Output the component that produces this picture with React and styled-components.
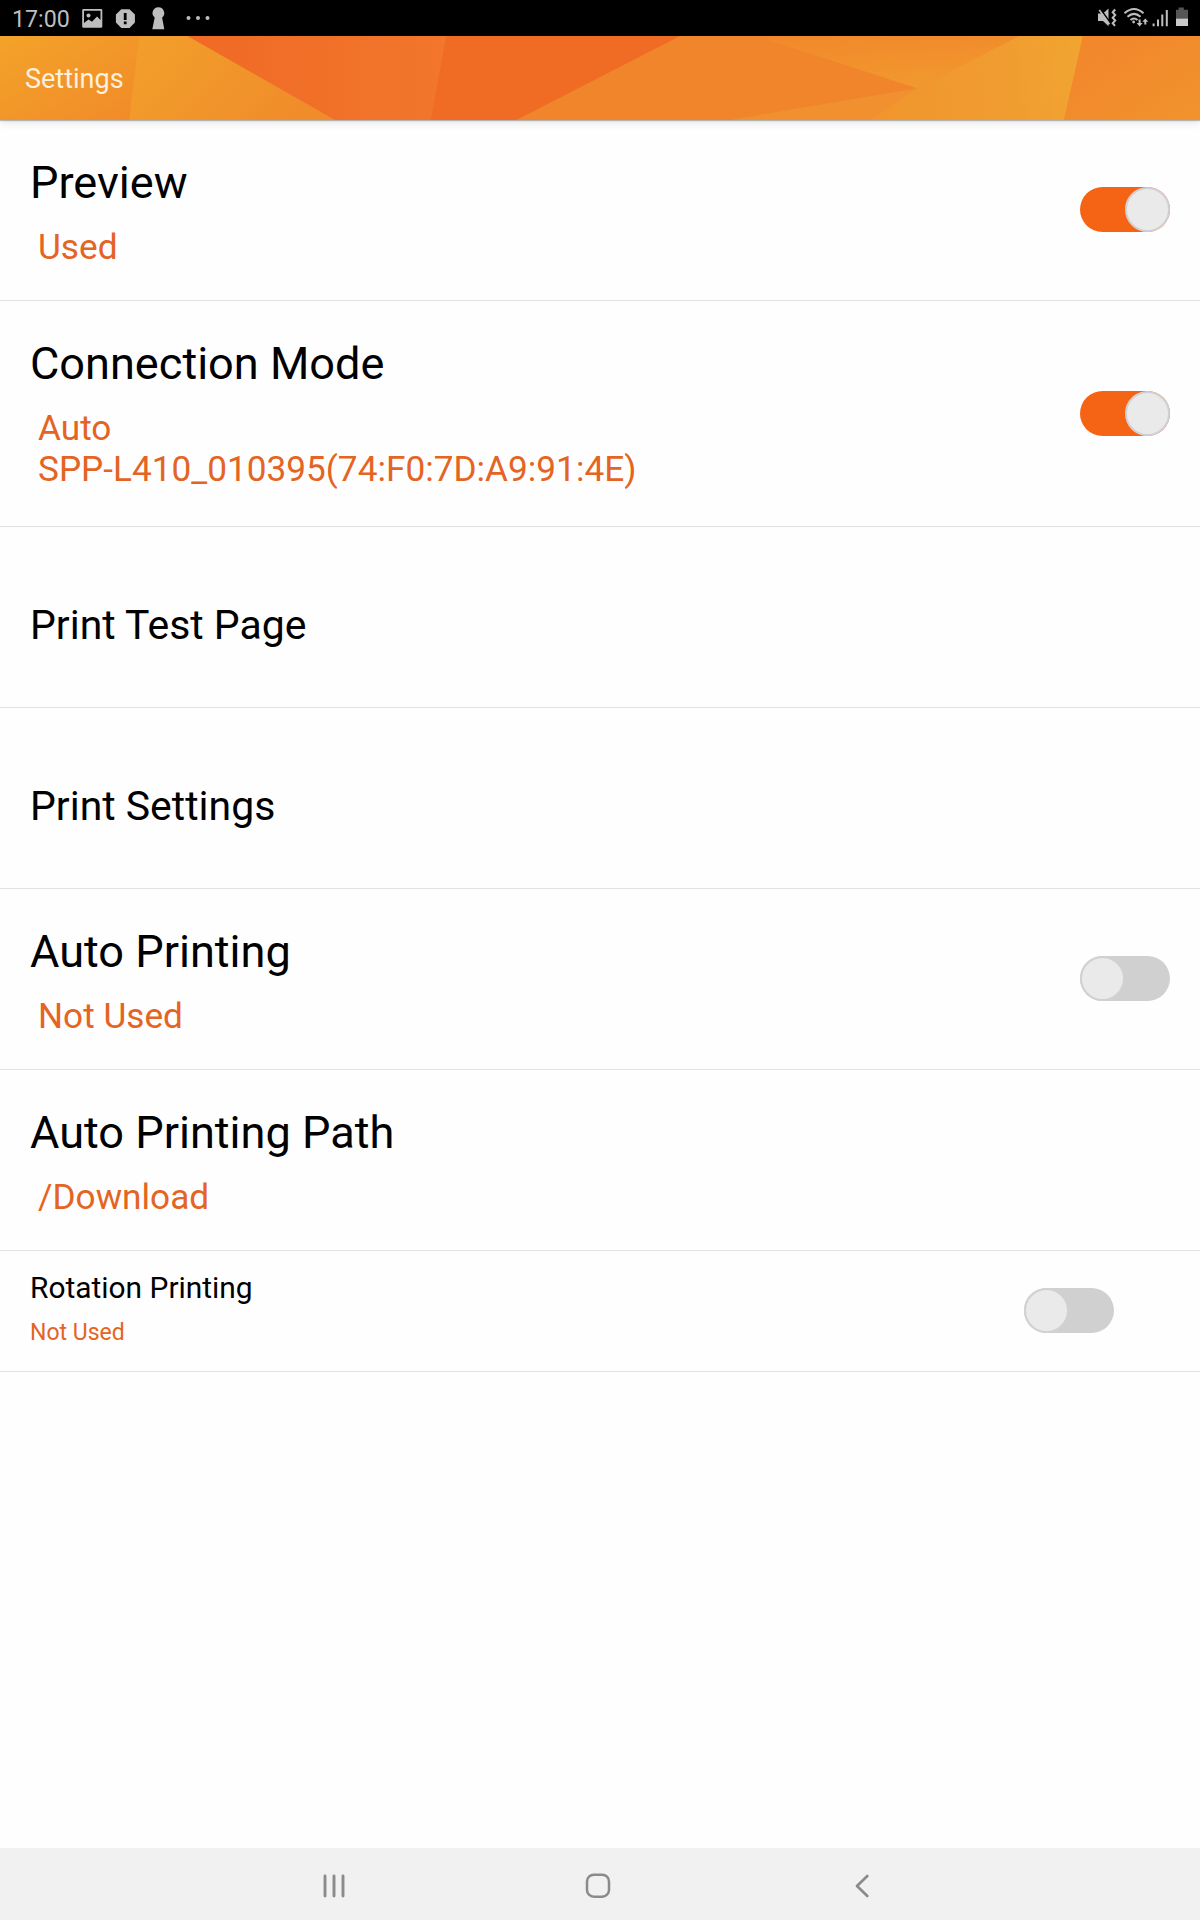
import React from 'react';
import styled, { createGlobalStyle } from 'styled-components';

const settings = [
  { title: 'Preview', lines: ['Used'], toggle: true, on: true },
  { title: 'Connection Mode', lines: ['Auto', 'SPP-L410_010395(74:F0:7D:A9:91:4E)'], toggle: true, on: true, height: 226 },
  { title: 'Print Test Page', plain: true },
  { title: 'Print Settings', plain: true },
  { title: 'Auto Printing', lines: ['Not Used'], toggle: true, on: false },
  { title: 'Auto Printing Path', lines: ['/Download'] },
  { title: 'Rotation Printing', lines: ['Not Used'], toggle: true, on: false, small: true, height: 121 },
]

class App extends React.Component {
  state = { settings }

  toggle = (index) => {
    const settings = this.state.settings.map( (s, i) => i === index ? { ...s, on: !s.on } : s )
    this.setState({ settings });
  }

  renderSetting = (setting, i) => {
    const { title, lines, toggle, on, plain, small, height } = setting;

    return (
      <Row key={title} $small={small} $height={height}>
        <Labels $small={small}>
          { plain ? <PlainTitle>{title}</PlainTitle> : <Title $small={small}>{title}</Title> }
          { lines && 
            <Summary $small={small}>
              { lines.map( line => <SummaryLine key={line}>{line}</SummaryLine> )}
            </Summary>
          }
        </Labels>
        { toggle && <Switch role="switch" aria-checked={on} $on={on} onClick={() => this.toggle(i)}><Knob /></Switch> }
      </Row>
    )
  }

  render() {
    return (
      <Screen>
        <GlobalStyle />
        <StatusBar>
          <Clock>17:00</Clock>
          <NotificationIcons />
          <SystemIcons />
        </StatusBar>
        <Header>
          <HeaderArt />
          <HeaderTitle>Settings</HeaderTitle>
        </Header>
        <List>
          { this.state.settings.map(this.renderSetting) }
        </List>
        <NavBar>
          <NavButton aria-label="Recents">
            <svg width="24" height="26" viewBox="0 0 24 26" stroke="#8b8b8b" strokeWidth="2.9" strokeLinecap="round">
              <path d="M3 3v20M12 3v20M21 3v20" />
            </svg>
          </NavButton>
          <NavButton aria-label="Home">
            <svg width="26" height="26" viewBox="0 0 26 26" fill="none" stroke="#8b8b8b" strokeWidth="2.5">
              <rect x="2" y="1.7" width="22" height="22" rx="6.8" />
            </svg>
          </NavButton>
          <NavButton aria-label="Back">
            <svg width="26" height="26" viewBox="0 0 26 26" fill="none" stroke="#8b8b8b" strokeWidth="2.7" strokeLinecap="round" strokeLinejoin="round">
              <path d="M18.3 3L8 13l10.3 10" />
            </svg>
          </NavButton>
        </NavBar>
      </Screen>
    )
  }
}

const NotificationIcons = () => (
  <svg width="130" height="36" viewBox="82 0 130 36" fill="#bebebe">
    <path fillRule="evenodd" d="M83.500 9h17.500a1.300 1.300 0 0 1 1.300 1.300v16.200a1.300 1.300 0 0 1-1.300 1.300h-17.500a1.300 1.300 0 0 1-1.300-1.300V10.300A1.300 1.300 0 0 1 83.500 9zM84 10.800v12.200l4.500-3.500 3.500 2.200 5-5.200 3.500 3.500v-9.200z" />
    <circle cx="88.500" cy="15.500" r="2" />
    <path fillRule="evenodd" d="M121.300 9.200h8.200l5.400 5.400v8l-5.400 5.400h-8.200l-5.400-5.400v-8zM123.800 13v7h2.800v-7zM123.800 21.600v2.600h2.800v-2.600z" />
    <path d="M158.500 7.300a5.800 5.800 0 0 1 3.600 10.300l2.200 11.600h-12l2.400-11.600a5.800 5.800 0 0 1 3.800-10.300z" />
    <circle cx="188.500" cy="18" r="2" />
    <circle cx="198" cy="18" r="2" />
    <circle cx="207.500" cy="18" r="2" />
  </svg>
)

const SystemIcons = () => (
  <SystemIconsSvg width="94" height="36" viewBox="1096 0 94 36" fill="#bebebe">
    <path d="M1098 13.500h5l5.500-5v17.700l-5.500-5.200h-5z" />
    <path d="M1100.600 9.300l10 14" stroke="#000" strokeWidth="1.600" />
    <path d="M1099.300 10l10.200 14.300" stroke="#bebebe" strokeWidth="1.700" />
    <path d="M1115.200 9.500l-2.500 2.800 2.500 2.700-2.500 2.700 2.500 2.800-2.500 2.700 2.300 2.600" fill="none" stroke="#bebebe" strokeWidth="2" />
    <g fill="none" stroke="#bebebe" strokeWidth="2">
      <path d="M1124.500 13.300q9.500-8.600 19 0" />
      <path d="M1127.500 16.800q6.500-5.800 13 0" />
      <path d="M1130.500 20q3.500-3 7 0" />
    </g>
    <circle cx="1133.600" cy="22" r="1.400" />
    <path d="M1138.600 19.500v3.500h-2l3 3.400 3-3.400h-2v-3.500zM1144.300 24.500v-2.700h-2l3-3.200 3 3.200h-2v2.700z" />
    <path d="M1152.600 23.600h2v2.600h-2zM1157 19.500h2v6.700h-2zM1161.300 14.600h2v11.600h-2zM1165.800 10h2v16.200h-2z" />
    <path d="M1176 9.800h2.600V7.600h5.200v2.200h4.200v8.700h-12z" fill="#555" />
    <path d="M1176 18.500h12v7.500h-12z" fill="#cacaca" />
  </SystemIconsSvg>
)

const HeaderArt = () => (
  <ArtSvg viewBox="0 36 1200 84" preserveAspectRatio="none">
    <defs>
      <linearGradient id="left" x1="0" y1="0" x2="1" y2="1">
        <stop offset="0" stopColor="#f3a32a" />
        <stop offset="1" stopColor="#f18a29" />
      </linearGradient>
      <linearGradient id="gold" gradientUnits="userSpaceOnUse" x1="150" y1="36" x2="270" y2="140">
        <stop offset="0" stopColor="#f29e2b" />
        <stop offset="1" stopColor="#f08d2a" />
      </linearGradient>
      <linearGradient id="red">
        <stop offset="0" stopColor="#f06a25" />
        <stop offset="1" stopColor="#f2762c" />
      </linearGradient>
      <linearGradient id="top" x1="0" y1="0" x2="0.3" y2="1">
        <stop offset="0" stopColor="#f1882b" />
        <stop offset="1" stopColor="#f1982e" />
      </linearGradient>
      <linearGradient id="sun" gradientUnits="userSpaceOnUse" x1="880" y1="100" x2="1080" y2="70">
        <stop offset="0" stopColor="#f0962d" />
        <stop offset="0.600" stopColor="#f09c30" />
        <stop offset="1" stopColor="#f1a430" />
      </linearGradient>
      <linearGradient id="right" x1="0" y1="0" x2="1" y2="1">
        <stop offset="0.150" stopColor="#f2872c" />
        <stop offset="1" stopColor="#f0932c" />
      </linearGradient>
    </defs>
    <path d="M0 36H1200V120H0z" fill="#f0852b" />
    <path d="M0 36H139L129 120H0z" fill="url(#left)" />
    <path d="M139 36H188L335 120H129z" fill="url(#gold)" />
    <path d="M187.500 36H446L430.500 120H335z" fill="url(#red)" />
    <path d="M446 36H680L516.500 120H430.500z" fill="#f06c25" />
    <path d="M756 36H1019L917 88.300z" fill="url(#top)" />
    <path d="M917 88.300L870 120H730z" fill="#f0902f" />
    <path d="M1019 36H1083L1064 120H870L917 88.300z" fill="url(#sun)" />
    <path d="M1083 36H1200V120H1064z" fill="url(#right)" />
  </ArtSvg>
)

const GlobalStyle = createGlobalStyle`
  body {
    margin: 0;
    background: #fff;
    font-family: Roboto, sans-serif;
  }
`

const Screen = styled.div`
  display: flex;
  flex-direction: column;
  width: 1200px;
  height: 1920px;
  background: #fefefe;
`

const StatusBar = styled.div`
  display: flex;
  align-items: center;
  height: 36px;
  box-sizing: border-box;
  padding: 0 10px 0 12px;
  background: #000;
`

const Clock = styled.span`
  width: 70px;
  padding-top: 3px;
  font-size: 23.2px;
  line-height: 33px;
  color: #bebebe;
`

const SystemIconsSvg = styled.svg`
  margin-left: auto;
`

const Header = styled.header`
  position: relative;
  display: flex;
  align-items: center;
  height: 84px;
  flex: none;
  box-shadow: 0 1px 1px rgba(0, 0, 0, 0.24), 0 3px 8px rgba(0, 0, 0, 0.1);
`

// sits behind the title
const ArtSvg = styled.svg`
  position: absolute;
  top: 0;
  left: 0;
  width: 100%;
  height: 100%;
`

const HeaderTitle = styled.h1`
  position: relative;
  margin: 2px 0 0 25px;
  font-size: 27px;
  font-weight: 400;
  line-height: 32px;
  color: #fdf0dc;
`

const List = styled.div`
  flex: 1;
`

const Row = styled.div`
  display: flex;
  align-items: center;
  justify-content: space-between;
  box-sizing: border-box;
  height: ${props => props.$height || 181}px;
  padding: 0 ${props => props.$small ? '86px' : '30px'} 0 30px;
  border-bottom: 1px solid #e2e2e2;
`

const Labels = styled.div`
  display: flex;
  flex-direction: column;
  align-self: flex-start;
  padding-top: ${props => props.$small ? '19px' : '36px'};
`

const Title = styled.div`
  font-size: ${props => props.$small ? '29.9px' : '45.1px'};
  line-height: ${props => props.$small ? '35px' : '53px'};
  color: #000;
`

const PlainTitle = styled.div`
  padding-top: 38px;
  font-size: 40.95px;
  line-height: 48px;
  color: #000;
`

const Summary = styled.div`
  margin-top: ${props => props.$small ? '14px' : '18px'};
  padding-left: ${props => props.$small ? '0' : '8px'};
  font-size: ${props => props.$small ? '23px' : '35.2px'};
  line-height: ${props => props.$small ? '28px' : '41px'};
  color: #e46423;
`

const SummaryLine = styled.div`
  white-space: nowrap;
`

const Switch = styled.button`
  display: flex;
  justify-content: ${props => props.$on ? 'flex-end' : 'flex-start'};
  width: 90px;
  height: 45px;
  margin-bottom: 1px;
  padding: 0;
  border: none;
  border-radius: 23px;
  background: ${props => props.$on ? '#f56414' : '#d0d0d0'};
  cursor: pointer;
`

const Knob = styled.span`
  box-sizing: border-box;
  width: 45px;
  height: 45px;
  border: 2px solid #d2d0d2;
  border-radius: 50%;
  background: #eaeaea;
`

const NavBar = styled.nav`
  display: flex;
  justify-content: center;
  align-items: center;
  gap: 184px;
  height: 72px;
  padding-right: 4px;
  background: #f1f1f1;
`

const NavButton = styled.button`
  display: flex;
  align-items: center;
  justify-content: center;
  width: 80px;
  height: 72px;
  padding: 3px 0 0;
  border: none;
  background: none;
  cursor: pointer;
`

export default App;
